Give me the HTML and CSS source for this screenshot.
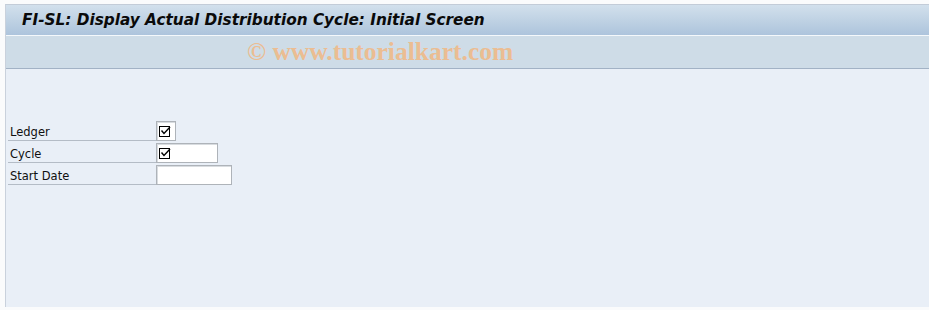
FILE: index.html
```html
<!DOCTYPE html>
<html lang="en">
<head>
  <meta charset="UTF-8">
  <title>FI-SL: Display Actual Distribution Cycle: Initial Screen</title>
  <link rel="stylesheet" href="styles.css">
</head>
<body>
  <div class="window">
    <div class="title-bar">
      <h1>FI-SL: Display Actual Distribution Cycle: Initial Screen</h1>
    </div>
    <div class="toolbar">
      <span class="watermark">&copy; www.tutorialkart.com</span>
    </div>
    <div class="content">
      <div class="form">
        <div class="row">
          <label class="field-label">Ledger</label>
          <span class="field field-check">
            <svg class="check" width="12" height="12" viewBox="0 0 12 12">
              <rect x="0.5" y="1.5" width="10" height="10" fill="none" stroke="#000" />
              <path d="M2.5 5.5 L5 8.5 L11 2" fill="none" stroke="#000" stroke-width="1.4" />
            </svg>
          </span>
        </div>
        <div class="row">
          <label class="field-label">Cycle</label>
          <span class="field field-cycle">
            <svg class="check" width="12" height="12" viewBox="0 0 12 12">
              <rect x="0.5" y="1.5" width="10" height="10" fill="none" stroke="#000" />
              <path d="M2.5 5.5 L5 8.5 L11 2" fill="none" stroke="#000" stroke-width="1.4" />
            </svg>
          </span>
        </div>
        <div class="row">
          <label class="field-label">Start Date</label>
          <span class="field field-date"></span>
        </div>
      </div>
    </div>
  </div>
</body>
</html>
```

FILE: styles.css
```css
body {
  margin: 0;
  background-color: #fafbfc;
  font-family: 'DejaVu Sans', Tahoma, sans-serif;
}

.window {
  margin: 4px 0 0 5px;
  border-top: 1px solid #c3ccd8;
  border-left: 1px solid #c9d1dc;
}

.title-bar {
  height: 30px;
  padding-left: 16px;
  display: flex;
  align-items: center;
  background: linear-gradient(to bottom, #d2e0ec, #adc4dc);
  border-bottom: 1px solid #f4f8fb;
}

.title-bar h1 {
  margin: 0;
  font-size: 15.3px;
  font-weight: bold;
  font-style: italic;
  color: #0a0a0a;
}

.toolbar {
  height: 32px;
  background-color: #cedce7;
  border-bottom: 1px solid #a2b2c5;
  display: flex;
  align-items: center;
  padding-left: 241px;
}

.watermark {
  font-family: 'Liberation Serif', serif;
  font-weight: bold;
  font-size: 25.5px;
  color: #ebbd92;
}

.content {
  height: 238px;
  background-color: #e9eff7;
  padding-top: 50px;
  box-sizing: border-box;
}

.form {
  padding-left: 2px;
}

.row {
  display: flex;
  height: 22px;
}

/* label cell with the grey rule under it */
.field-label {
  width: 148px;
  height: 22px;
  box-sizing: border-box;
  padding: 6px 0 0 2px;
  border-bottom: 1px solid #b4bcc6;
  font-size: 11.5px;
  color: #101010;
}

.field {
  margin-top: 2px;
  height: 20px;
  box-sizing: border-box;
  background-color: #fff;
  border: 1px solid #aeb3b9;
  box-shadow: inset 1px 1px 0 #d8dce0;
  display: flex;
  align-items: center;
  padding-left: 2px;
}

.field-check {
  width: 20px;
}

.field-cycle {
  width: 62px;
}

.field-date {
  width: 76px;
}

.check {
  display: block;
}
```
